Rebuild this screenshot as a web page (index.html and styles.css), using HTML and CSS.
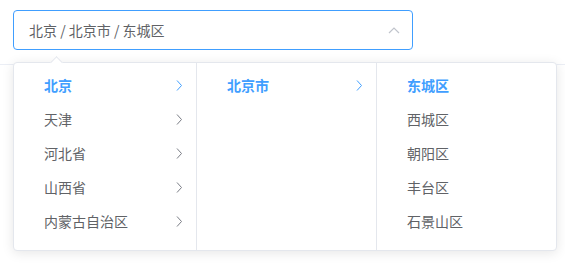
FILE: index.html
```html
<!DOCTYPE html>
<html lang="zh-CN">
<head>
    <meta charset="UTF-8">
    <title>Cascader</title>
    <link rel="stylesheet" href="styles.css">
</head>
<body>
    <div class="demo">
        <div class="cascader">
            <div class="cascader-input">
                <span class="cascader-value">北京 / 北京市 / 东城区</span>
                <svg class="cascader-caret" width="12" height="7" viewBox="0 0 12 7">
                    <path d="M1 6 L6 1 L11 6" fill="none" stroke="#c0c4cc" stroke-width="1.2"/>
                </svg>
            </div>
        </div>
    </div>

    <div class="dropdown">
        <div class="dropdown-arrow"></div>
        <div class="menus">
            <ul class="menu">
                <li class="node active">北京<svg class="node-arrow" viewBox="0 0 6 11"><path d="M1 0.5 L5.5 5.5 L1 10.5" fill="none" stroke="currentColor" stroke-width="1"/></svg></li>
                <li class="node">天津<svg class="node-arrow" viewBox="0 0 6 11"><path d="M1 0.5 L5.5 5.5 L1 10.5" fill="none" stroke="currentColor" stroke-width="1"/></svg></li>
                <li class="node">河北省<svg class="node-arrow" viewBox="0 0 6 11"><path d="M1 0.5 L5.5 5.5 L1 10.5" fill="none" stroke="currentColor" stroke-width="1"/></svg></li>
                <li class="node">山西省<svg class="node-arrow" viewBox="0 0 6 11"><path d="M1 0.5 L5.5 5.5 L1 10.5" fill="none" stroke="currentColor" stroke-width="1"/></svg></li>
                <li class="node">内蒙古自治区<svg class="node-arrow" viewBox="0 0 6 11"><path d="M1 0.5 L5.5 5.5 L1 10.5" fill="none" stroke="currentColor" stroke-width="1"/></svg></li>
            </ul>
            <ul class="menu">
                <li class="node active">北京市<svg class="node-arrow" viewBox="0 0 6 11"><path d="M1 0.5 L5.5 5.5 L1 10.5" fill="none" stroke="currentColor" stroke-width="1"/></svg></li>
            </ul>
            <ul class="menu">
                <li class="node active">东城区</li>
                <li class="node">西城区</li>
                <li class="node">朝阳区</li>
                <li class="node">丰台区</li>
                <li class="node">石景山区</li>
            </ul>
        </div>
    </div>
</body>
</html>
```

FILE: styles.css
```css
body {
    margin: 0;
    font-family: "Noto Sans CJK SC", "Helvetica Neue", Arial, sans-serif;
    font-size: 14px;
    color: #606266;
    background-color: #fff;
}
.demo {
    padding: 10px 13px 14px;
    border-bottom: 1px solid #ebeef5;
}
.cascader-input {
    box-sizing: border-box;
    width: 400px;
    height: 40px;
    display: flex;
    align-items: center;
    justify-content: space-between;
    padding: 0 12px 0 15px;
    border: 1px solid #409eff;
    border-radius: 4px;
}
.cascader-value {
    color: #606266;
}
.dropdown {
    position: absolute;
    top: 62px;
    left: 13px;
    width: 544px;
    box-sizing: border-box;
    background-color: #fff;
    border: 1px solid #e4e7ed;
    border-radius: 4px;
    box-shadow: 0 2px 12px rgba(0,0,0,0.1);
}
.dropdown-arrow {
    position: absolute;
    top: -5px;
    left: 38px;
    width: 8px;
    height: 8px;
    background-color: #fff;
    border-top: 1px solid #e4e7ed;
    border-left: 1px solid #e4e7ed;
    transform: rotate(45deg);
}
.menus {
    display: grid;
    grid-template-columns: 183px 180px 1fr;
}
.menu {
    list-style: none;
    margin: 0;
    padding: 5px 0 7px;
    height: 187px;
    box-sizing: border-box;
    border-right: 1px solid #e4e7ed;
}
.menu:last-child {
    border-right: none;
}
.node {
    position: relative;
    height: 34px;
    line-height: 34px;
    padding: 0 30px;
}
.node.active {
    color: #409eff;
    font-weight: bold;
}
.node-arrow {
    position: absolute;
    right: 14px;
    top: 12px;
    width: 6px;
    height: 11px;
    color: #7a7d85;
}
.node.active .node-arrow {
    color: #409eff;
}
```
